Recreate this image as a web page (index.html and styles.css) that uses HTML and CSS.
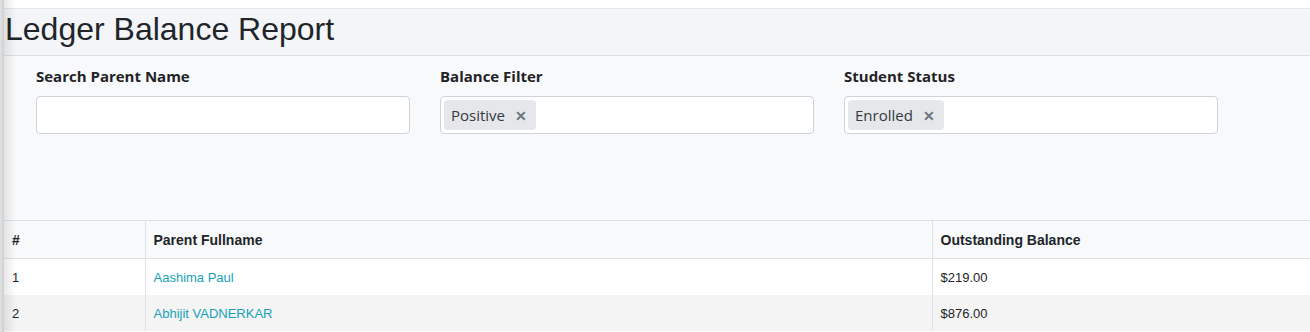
FILE: index.html
```html
<!DOCTYPE html>
<html>
<head>
    <title>Ledger Balance Report</title>
    <link rel="stylesheet" href="styles.css">
</head>
<body>
    <div class="layout">
        <div class="edge"></div>
        <div class="page">
            <div class="topbar"></div>
            <h1 class="title">Ledger Balance Report</h1>

            <div class="filters">
                <div class="field">
                    <label>Search Parent Name</label>
                    <div class="box"><input type="text"></div>
                </div>
                <div class="field">
                    <label>Balance Filter</label>
                    <div class="box">
                        <span class="chip">Positive <span class="x">&#x2715;</span></span>
                    </div>
                </div>
                <div class="field">
                    <label>Student Status</label>
                    <div class="box">
                        <span class="chip">Enrolled <span class="x">&#x2715;</span></span>
                    </div>
                </div>
            </div>

            <table class="report">
                <colgroup>
                    <col class="c-num">
                    <col class="c-name">
                    <col>
                </colgroup>
                <thead>
                    <tr>
                        <th>#</th>
                        <th>Parent Fullname</th>
                        <th>Outstanding Balance</th>
                    </tr>
                </thead>
                <tbody>
                    <tr>
                        <td>1</td>
                        <td><a href="#">Aashima Paul</a></td>
                        <td>$219.00</td>
                    </tr>
                    <tr>
                        <td>2</td>
                        <td><a href="#">Abhijit VADNERKAR</a></td>
                        <td>$876.00</td>
                    </tr>
                </tbody>
            </table>
        </div>
    </div>
</body>
</html>
```

FILE: styles.css
```css
body {
    margin: 0;
    background: #fff;
    font-family: "Liberation Sans", Arial, sans-serif;
    color: #212529;
}
.layout {
    display: flex;
    min-height: 332px;
}
.edge {
    width: 4px;
    flex: none;
    background: linear-gradient(to right, #e2e2e2, #cfcfcf);
}
.page {
    flex: 1;
    position: relative;
    min-width: 0;
}
/* soft shadow thrown by the side panel */
.page::after {
    content: "";
    position: absolute;
    top: 0;
    left: 0;
    bottom: 0;
    width: 12px;
    background: linear-gradient(to right, rgba(0, 0, 0, 0.09), rgba(0, 0, 0, 0));
    pointer-events: none;
}
.topbar {
    height: 8px;
    border-bottom: 1px solid #e3e5e8;
    background: #fff;
}
.title {
    margin: 0;
    height: 47px;
    box-sizing: border-box;
    padding: 1px 0 0 1px;
    line-height: 38px;
    font-size: 32px;
    font-weight: normal;
    background: #f4f5f8;
    border-bottom: 1px solid #dcdfe3;
}
.filters {
    display: flex;
    gap: 30px;
    height: 165px;
    box-sizing: border-box;
    padding: 10px 0 0 32px;
    background: #f8f9fa;
    border-bottom: 1px solid #dee2e6;
}
.field {
    width: 374px;
}
.field label {
    display: block;
    font-family: "Open Sans", "Noto Sans", sans-serif;
    font-weight: bold;
    font-size: 15px;
    line-height: 20px;
    margin-bottom: 10px;
    color: #1f2328;
}
.box {
    height: 38px;
    box-sizing: border-box;
    background: #fff;
    border: 1px solid #ced4da;
    border-radius: 4px;
    padding: 3px;
    display: flex;
    align-items: center;
}
.box input {
    border: none;
    outline: none;
    width: 100%;
    height: 100%;
    background: transparent;
}
.chip {
    display: inline-flex;
    align-items: center;
    height: 30px;
    padding: 0 9px 0 7px;
    background: #e5e7eb;
    border-radius: 4px;
    font-family: "Open Sans", "Noto Sans", sans-serif;
    font-size: 15px;
    color: #343a40;
}
.chip .x {
    margin-left: 10px;
    font-size: 14px;
    color: #6c757d;
    font-weight: bold;
}
.report {
    width: 100%;
    border-collapse: collapse;
    font-size: 13px;
}
.c-num {
    width: 141px;
}
.c-name {
    width: 787px;
}
.report th,
.report td {
    text-align: left;
    padding: 0 8px;
    border-left: 1px solid #dee2e6;
}
.report th:first-child,
.report td:first-child {
    border-left: none;
}
.report th {
    height: 37px;
    font-size: 14px;
    background: #f8f9fa;
    border-bottom: 1px solid #dee2e6;
    font-weight: bold;
}
.report td {
    height: 36px;
}
.report tbody tr:nth-child(even) td {
    background: #f4f4f4;
}
.report a {
    color: #17a2b8;
    text-decoration: none;
}
```
